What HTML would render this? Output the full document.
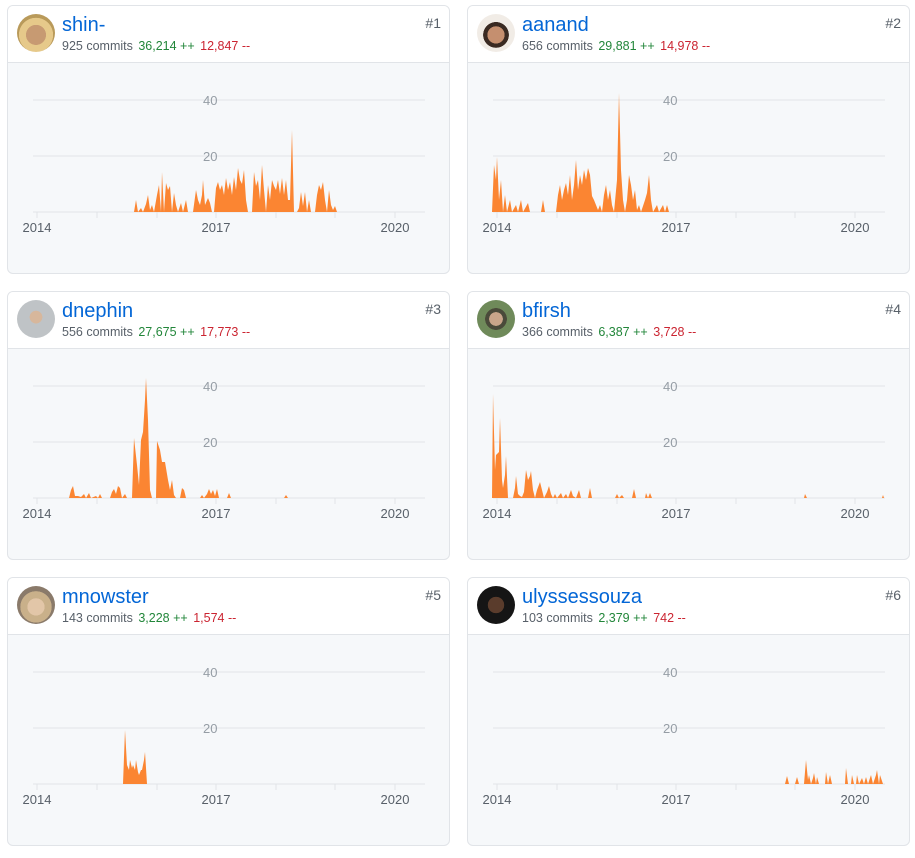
<!DOCTYPE html>
<html><head><meta charset="utf-8"><style>
body{margin:0;background:#fff;width:915px;height:858px;position:relative;font-family:"Liberation Sans",Arial,sans-serif;overflow:hidden}
.card{position:absolute;width:441px;height:267px;border:1px solid #e1e4e8;border-radius:6px;background:#f6f8fa;overflow:hidden}
.hd{position:absolute;left:0;top:0;right:0;height:56px;background:#fff;border-bottom:1px solid #e1e4e8}
.av{position:absolute;left:9px;top:8px;width:38px;height:38px;border-radius:50%}
.nm{position:absolute;left:54px;top:8px;font-size:20px;color:#0366d6}
.st{position:absolute;left:54px;top:33px;font-size:12.5px;color:#586069;white-space:nowrap}
.st .a{color:#22863a;margin-left:2px}.st .d{color:#cb2431;margin-left:2px}
.rk{position:absolute;right:8px;top:9px;font-size:14px;color:#586069}
svg{position:absolute;left:0;top:0}
</style></head><body>
<div class="card" style="left:7px;top:5px"><div class="hd"><div class="av" style="background:radial-gradient(circle at 50% 55%,#c79a72 0 35%,#e6c98a 36% 60%,#b99a5a 61%)"></div><div class="nm">shin-</div><div class="st">925 commits <span class="a">36,214 ++</span> <span class="d">12,847 --</span></div><div class="rk">#1</div></div></div>
<div class="card" style="left:467px;top:5px"><div class="hd"><div class="av" style="background:radial-gradient(circle at 50% 55%,#c58f6f 0 30%,#3a2a22 31% 45%,#f1ece6 46%)"></div><div class="nm">aanand</div><div class="st">656 commits <span class="a">29,881 ++</span> <span class="d">14,978 --</span></div><div class="rk">#2</div></div></div>
<div class="card" style="left:7px;top:291px"><div class="hd"><div class="av" style="background:radial-gradient(circle at 50% 45%,#d7b79c 0 22%,#bfc3c6 23%)"></div><div class="nm">dnephin</div><div class="st">556 commits <span class="a">27,675 ++</span> <span class="d">17,773 --</span></div><div class="rk">#3</div></div></div>
<div class="card" style="left:467px;top:291px"><div class="hd"><div class="av" style="background:radial-gradient(circle at 50% 50%,#c9a58a 0 25%,#4a4a3a 26% 40%,#6f8a5a 41%)"></div><div class="nm">bfirsh</div><div class="st">366 commits <span class="a">6,387 ++</span> <span class="d">3,728 --</span></div><div class="rk">#4</div></div></div>
<div class="card" style="left:7px;top:577px"><div class="hd"><div class="av" style="background:radial-gradient(circle at 50% 55%,#e2c6a8 0 30%,#c9b08a 31% 55%,#8a7a6a 56%)"></div><div class="nm">mnowster</div><div class="st">143 commits <span class="a">3,228 ++</span> <span class="d">1,574 --</span></div><div class="rk">#5</div></div></div>
<div class="card" style="left:467px;top:577px"><div class="hd"><div class="av" style="background:radial-gradient(circle at 50% 50%,#5a3c2c 0 30%,#151515 31%)"></div><div class="nm">ulyssessouza</div><div class="st">103 commits <span class="a">2,379 ++</span> <span class="d">742 --</span></div><div class="rk">#6</div></div></div>

<svg width="915" height="858" viewBox="0 0 915 858" font-family="Liberation Sans, Arial, sans-serif" font-size="13">
<defs><g id="ax">
<line x1="26" x2="418" y1="95" y2="95" stroke="#e1e4e8"/>
<line x1="26" x2="418" y1="151" y2="151" stroke="#e1e4e8"/>
<line x1="26" x2="418" y1="207" y2="207" stroke="#e1e4e8"/>
<g stroke="#e1e4e8"><line x1="30" x2="30" y1="207" y2="213"/><line x1="90" x2="90" y1="207" y2="213"/><line x1="150" x2="150" y1="207" y2="213"/><line x1="209" x2="209" y1="207" y2="213"/><line x1="269" x2="269" y1="207" y2="213"/><line x1="328" x2="328" y1="207" y2="213"/><line x1="388" x2="388" y1="207" y2="213"/></g>
<text x="196" y="100" fill="#959da5">40</text><text x="196" y="156" fill="#959da5">20</text>
<g fill="#586069" text-anchor="middle"><text x="30" y="227">2014</text><text x="209" y="227">2017</text><text x="388" y="227">2020</text></g>
</g></defs>
<use href="#ax" x="7" y="5"/><use href="#ax" x="467" y="5"/><use href="#ax" x="7" y="291"/><use href="#ax" x="467" y="291"/><use href="#ax" x="7" y="577"/><use href="#ax" x="467" y="577"/>
<g fill="#fb8532">
<path d="M134,212 L136,200 L138,212 L141,208 L143,212 L146,204 L148,195 L150,210 L152,205 L154,212 L157,195 L159,185 L161,212 L162,172 L164,212 L166,183 L168,190 L170,186 L172,212 L174,193 L176,205 L178,212 L181,203 L183,212 L186,200 L188,212 L193,212 L196,190 L198,200 L200,205 L202,195 L203,180 L205,205 L208,198 L210,203 L212,212 L214,212 L216,188 L218,182 L220,190 L222,185 L224,195 L226,178 L228,190 L230,182 L232,195 L234,177 L236,190 L238,168 L240,180 L242,184 L244,170 L246,200 L248,212 L252,212 L254,172 L256,186 L258,180 L260,200 L262,165 L264,190 L266,212 L268,185 L270,200 L272,180 L274,186 L276,190 L278,180 L280,194 L282,178 L284,195 L286,180 L288,200 L290,200 L292,130 L294,212 L297,212 L299,208 L301,192 L303,206 L305,192 L307,212 L309,200 L311,212 L315,212 L317,195 L319,185 L321,190 L323,182 L325,200 L327,212 L329,190 L331,205 L333,210 L335,206 L337,212 Z"/>
<path d="M492,212 L494,165 L496,180 L497,157 L499,200 L501,180 L503,212 L505,195 L507,212 L510,200 L512,212 L516,205 L518,212 L521,200 L523,212 L528,203 L530,212 L541,212 L543,200 L545,212 L556,212 L558,195 L560,185 L562,200 L564,190 L566,183 L568,195 L570,175 L572,200 L574,185 L576,160 L578,190 L580,175 L582,185 L584,170 L586,180 L588,168 L590,175 L592,196 L594,200 L596,205 L598,210 L600,205 L602,212 L604,195 L606,185 L608,200 L610,190 L612,205 L614,212 L617,180 L619,93 L621,170 L623,200 L625,212 L627,200 L629,175 L631,185 L633,200 L635,190 L637,210 L639,205 L641,212 L645,200 L647,193 L649,175 L651,200 L653,212 L657,205 L659,212 L663,205 L665,212 L667,205 L669,212 Z"/>
<path d="M69,498 L71,490 L73,486 L75,496 L78,496 L81,497 L84,494 L86,498 L89,493 L91,498 L96,496 L98,498 L100,494 L102,498 L110,498 L112,492 L114,489 L116,494 L118,486 L120,488 L122,498 L125,494 L127,498 L132,498 L134,438 L137,465 L139,485 L141,440 L143,432 L145,400 L146,378 L148,420 L150,490 L152,498 L156,498 L157,441 L160,450 L162,462 L165,462 L168,480 L170,490 L172,480 L174,495 L176,498 L180,498 L182,488 L184,490 L186,498 L200,498 L202,495 L204,498 L207,494 L209,489 L211,494 L213,490 L215,496 L217,489 L219,498 L227,498 L229,493 L231,498 Z M284,498 L286,495 L288,498 Z"/>
<path d="M492,498 L493,394 L495,470 L496,455 L499,452 L500,418 L502,480 L503,488 L505,475 L506,456 L508,498 L513,498 L515,488 L516,476 L518,494 L520,496 L522,497 L524,492 L526,470 L528,480 L530,476 L531,471 L533,490 L535,498 L537,490 L540,482 L542,490 L544,498 L547,492 L549,486 L551,494 L553,498 L555,494 L557,498 L561,493 L563,498 L566,494 L568,498 L571,490 L573,496 L576,498 L579,490 L581,498 L588,498 L590,488 L592,498 L615,498 L617,494 L619,498 L622,495 L624,498 L632,498 L634,489 L636,498 L645,498 L646,493 L648,498 L650,493 L652,498 Z M804,498 L805,494 L807,498 Z M882,498 L883,495 L884,498 Z"/>
<path d="M123,784 L125,730 L127,765 L129,770 L130,760 L132,768 L133,765 L135,770 L136,760 L138,772 L139,775 L141,770 L142,770 L144,760 L145,752 L147,784 Z"/>
<path d="M785,784 L787,776 L789,784 L795,784 L797,777 L799,784 L804,784 L806,760 L808,780 L809,775 L811,784 L813,778 L814,773 L816,784 L817,777 L819,784 L825,784 L826,772 L828,784 L830,775 L832,784 L845,784 L846,768 L848,784 L851,784 L852,775 L854,784 L856,784 L857,775 L859,784 L862,778 L864,784 L866,777 L868,784 L871,775 L873,784 L876,775 L877,770 L879,784 L880,775 L883,784 Z"/>
</g>
</svg>
</body></html>
